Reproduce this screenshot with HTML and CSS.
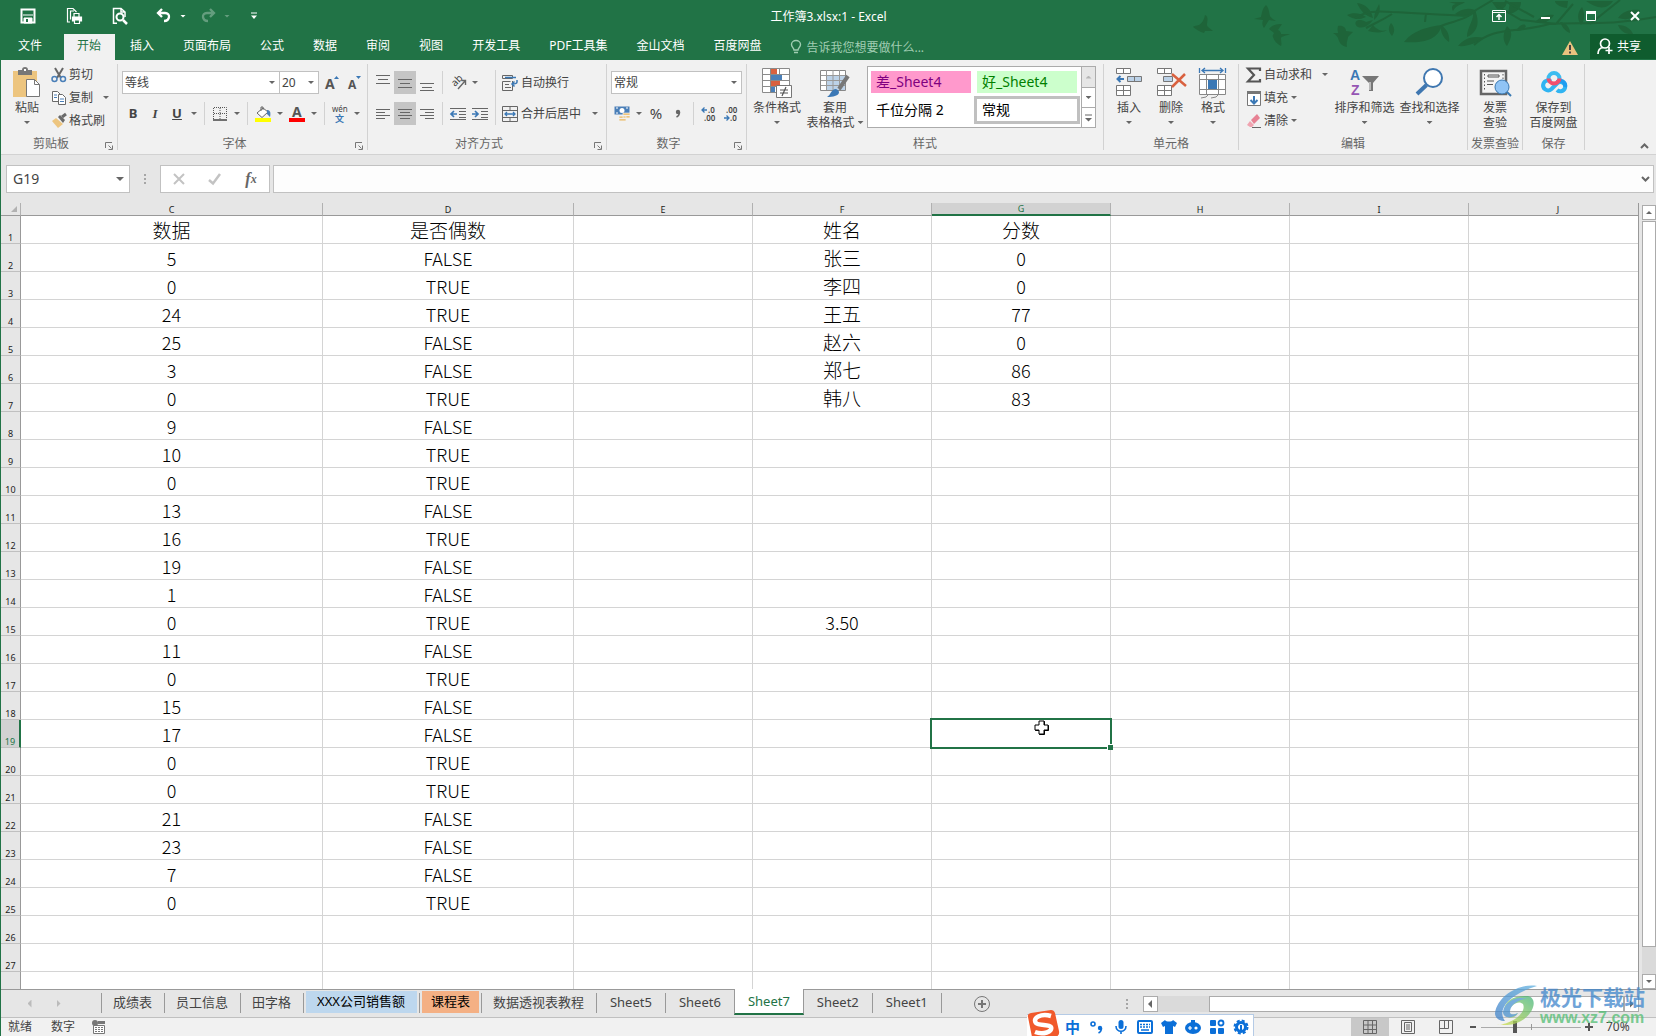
FILE: index.html
```html
<!DOCTYPE html>
<html lang="zh-CN">
<head>
<meta charset="utf-8">
<title>工作簿3.xlsx:1 - Excel</title>
<link rel="stylesheet" href="styles.css">
</head>
<body>
<header class="top">
  <svg class="foliage" width="466" height="60" viewBox="0 0 466 60" aria-hidden="true">
    <g fill="#1e6439">
      <path d="M15 15c-1 5-3 8-6 10-3 1-6 1-6 2 3 2 7 5 11 6l1-2 8 0c-2-2-6-4-6-6 0-4 2-8-2-10z"/>
      <path d="M76 5c-4 4-4 8-5 12l-7 2 9 1c-1 3-1 5 1 8l5-8 7 1c-3-2-5-3-6-5-1-4-1-8-4-11zM79 29c2-3 6-5 13-5l-4 6c2 1 3 2 3 4h9c-4 2-8 2-9 4 0 4 1 6 0 8-4-2-7-5-8-9-1-2 1-3 1-4zM148 26c-1 4 0 5 0 7l-5 0c3 2 4 3 5 5 1 4 3 8 9 9-1-4 1-8 1-10l5-5-7-1c0-3-3-6-8-5z"/>
      <path d="M157 15c6-3 14-2 19 2-6 3-13 3-19-2zM167 3c8 1 14 6 16 15-8-2-13-8-16-15zM176 22c-9-5-14 1-8 5 6 2 11-2 15-7zM184 20c0-8 4-13 5-16 2 6 0 12-5 16zM183 25c4 5 9 7 14 5-6 4-14 2-19 1zM201 23c4 4 4 9 1 13-4-4-4-9-1-13zM252 25c-3 11-12 19-38 17 6-7 14-14 38-17zM251 25c6 4 9 10 8 17-5-4-9-9-8-17zM285 10c-8-3-15 0-20 4 7 4 13 2 18-1 1 8-6 14-6 24 11-5 13-15 8-27zM294 38c-7 4-15 9-26 8 5-6 13-11 26-8zM317 26c7 6 4 13 0 20-5-6-4-13 0-20zM326 31c3-6 8-8 10-5-2 4-6 5-10 5zM259 2h16c-2 2-9 3-12 9-2-4-1-6 3-7zM302 2h15c-1 6-5 8-10 7zM320 2h11c0 7-5 11-13 12zM345 22c6-6 13-8 19-7-4 6-11 10-19 7zM370 22c2 5 5 9 10 11 0-6-4-10-10-11zM377 8c-7-1-12-4-12-7h13zM392 7c3 6 3 13-1 18-4-6-4-12 1-18zM396 1h27c-5 8-15 9-27 0zM428 18c5-7 13-9 22-8-4 8-12 11-22 8zM428 25c8 0 13 4 15 9-7 1-13-3-15-9z"/>
    </g>
    <g fill="none" stroke="#1e6439" stroke-width="2">
      <path d="M165 18c12-7 21-7 37-6 28 1 44 3 77 4M176 28c11-6 15-7 26-14M251 26c12-5 26-6 35-16l17-10M236 13l-1 9M284 45c20-19 40-11 75-21 30-2 60 2 107-7M307 6l24 14 35 4M315 1l29 16M366 24l17-20M400 24l30-24"/>
    </g>
  </svg>
  <div class="titlebar">
    <nav class="quick">
      <button class="q" aria-label="保存"><svg width="16" height="16"><path d="M1.500 1.500h13v13h-13z" fill="none" stroke="#fff" stroke-width="2"/><path d="M3 7h10M4 10h8v5H4z" stroke="#fff" fill="#fff"/><path d="M6 11h2v3H6z" fill="#217346"/></svg></button>
      <button class="q" aria-label="打印"><svg width="18" height="18" fill="none" stroke="#fff" stroke-width="1.200"><path d="M4 15H1.500V1.500H7L10.500 5M4.500 12.500V4H8"/><path d="M8 10V6.500h5V10"/><path d="M6.500 10h9v4h-9z" fill="#fff"/><path d="M8.500 13h5v3.500h-5z" fill="#217346"/></svg></button>
      <button class="q" aria-label="打印预览"><svg width="16" height="18" fill="none" stroke="#fff" stroke-width="1.500"><path d="M5 16.200H1.500V1.500H9L13 5v5M9 1.500V5h4"/><circle cx="8" cy="10" r="3.500" stroke-width="2"/><path d="M11 13l4 4" stroke-width="2.500"/></svg></button>
      <button class="q" aria-label="撤消"><svg width="16" height="16" fill="none" stroke="#fff" stroke-width="2.300"><path d="M6 1L2 5l4 4M2.500 5H9c6 0 5 8-1 8"/></svg><i class="caret lite"></i></button>
      <button class="q dim" aria-label="恢复"><svg width="16" height="16" fill="none" stroke="#fff" stroke-width="2.300"><path d="M10 1l4 4-4 4M13.500 5H7c-6 0-5 8 1 8"/></svg><i class="caret lite"></i></button>
      <button class="q" aria-label="自定义快速访问工具栏"><svg width="8" height="8"><path d="M1 1h6" stroke="#fff"/><path d="M1 3.500h6L4 7z" fill="#fff"/></svg></button>
    </nav>
    <h1>工作簿3.xlsx:1 - Excel</h1>
    <div class="winctl">
      <button aria-label="功能区显示选项"><svg width="14" height="12" fill="none" stroke="#fff"><path d="M.5.5h13v11H.5zM1 2.500h12"/><path d="M7 10V5M4.500 7L7 4.500 9.500 7" stroke-width="1.500"/></svg></button>
      <button aria-label="最小化"><svg width="10" height="10"><path d="M1 7h9" stroke="#fff" stroke-width="2"/></svg></button>
      <button aria-label="最大化"><svg width="10" height="10"><path d="M.5.5h9v9h-9z" fill="none" stroke="#fff"/><path d="M0 1.500h10" stroke="#fff" stroke-width="3"/></svg></button>
      <button aria-label="关闭"><svg width="10" height="10"><path d="M1 1l8 8M9 1L1 9" stroke="#fff" stroke-width="2"/></svg></button>
    </div>
  </div>
  <div class="tabbar">
    <button class="tab file">文件</button><button class="tab on">开始</button><button class="tab">插入</button><button class="tab">页面布局</button><button class="tab">公式</button><button class="tab">数据</button><button class="tab">审阅</button><button class="tab">视图</button><button class="tab">开发工具</button><button class="tab">PDF工具集</button><button class="tab">金山文档</button><button class="tab">百度网盘</button>
    <label class="tell"><svg width="12" height="14" fill="none" stroke="#a0cdb2"><path d="M4 10C4 8 1.500 7 1.500 4.500a4.500 4 0 0 1 9 0C10.500 7 8 8 8 10zM4 12.500h4" stroke-width="1.400"/></svg><input type="text" placeholder="告诉我您想要做什么..." aria-label="告诉我您想要做什么"></label>
    <svg class="warn" width="16" height="14"><path d="M8 0l8 14H0z" fill="#ebc37f"/><path d="M8 4v5M8 10.500v2" stroke="#444" stroke-width="2"/></svg>
    <button class="share"><svg width="16" height="17" fill="none" stroke="#fff" stroke-width="1.700"><circle cx="8" cy="5.500" r="4.500"/><path d="M1 16c0-4 2-6 5-6.500M12 9v7M8.500 12.500h7"/></svg>共享</button>
  </div>
</header>

<section class="ribbon">
  <div class="group g-clip">
    <div class="gbody">
      <button class="big paste"><svg width="30" height="30"><path d="M1 3h24v26H1z" fill="#edc57f"/><path d="M6 2h4a3 3 0 0 1 6 0h4v5H6z" fill="#777"/><path d="M12 1h2v2h-2z" fill="#fff"/><path d="M14.500 11.500h8l5 5v12h-13z" fill="#fff" stroke="#777"/><path d="M22.500 11.500v5h5" fill="none" stroke="#777"/></svg>粘贴<i class="cbox"><i class="caret"></i></i></button>
      <div class="stack">
        <button class="txt"><svg width="16" height="16" fill="none"><path d="M4 1l6 10M12 1L6 11" stroke="#666" stroke-width="2"/><circle cx="3.500" cy="12" r="2.500" stroke="#4a7fb8" stroke-width="1.500"/><circle cx="12" cy="12" r="2.500" stroke="#4a7fb8" stroke-width="1.500"/></svg>剪切</button>
        <button class="txt"><svg width="16" height="16" fill="#fff" stroke="#6a6a6a"><path d="M1.500 1.500h5l3 3v7h-8z"/><path d="M7.500 4.500h4l3 3v7h-7z"/><path d="M3 5h3M3 7.500h3M9 9h4M9 11.500h4" stroke="#4a7fb8"/></svg>复制<i class="caret far"></i></button>
        <button class="txt"><svg width="16" height="16"><path d="M1 8l4-3 7 6-5 4z" fill="#edc57f"/><path d="M7 4l2-2 5 5-2 3z" fill="#6a6a6a"/><path d="M11 4l4-3" stroke="#6a6a6a" stroke-width="3"/></svg>格式刷</button>
      </div>
    </div>
    <div class="gname"><span>剪贴板</span><button class="launch" aria-label="剪贴板选项"><svg width="8" height="8" fill="none" stroke="#777"><path d="M.5 6V.5H7M3.500 3.500l3 3M7.500 3.500v4h-4"/></svg></button></div>
  </div>

  <div class="group g-font">
    <div class="gbody rows">
      <div class="row">
        <select class="sel wfont" aria-label="字体"><option>等线</option></select><select class="sel wsize" aria-label="字号"><option>20</option></select>
        <button class="ic" aria-label="增大字号"><svg width="16" height="16"><text x="0" y="14" class="ga g15">A</text><path d="M9 4l2.500-3L14 4z" fill="#3b78b5"/></svg></button>
        <button class="ic" aria-label="减小字号"><svg width="16" height="16"><text x="1" y="14" class="ga g12">A</text><path d="M9 1h5l-2.500 3z" fill="#3b78b5"/></svg></button>
      </div>
      <div class="row">
        <button class="ic fb">B</button><button class="ic fi">I</button><button class="ic fu">U</button><button class="cb" aria-label="下划线选项"><i class="caret"></i></button><i class="vs"></i>
        <button class="ic" aria-label="边框"><svg width="14" height="14"><path d="M.5 12V.5h13V12M7 1v11M1 6.500h12" fill="none" stroke="#555" stroke-dasharray="1 1"/><path d="M0 13h14" stroke="#444" stroke-width="1.500"/></svg></button><button class="cb" aria-label="边框选项"><i class="caret"></i></button><i class="vs"></i>
        <button class="ic" aria-label="填充颜色"><svg width="16" height="16"><path d="M2 7l6-5 5 4-6 5.500z" fill="#fff" stroke="#666"/><path d="M6 5V1h2v3" fill="none" stroke="#666"/><path d="M12 4c3 0 4 2 3 7l-3-3z" fill="#4a7fb8"/><path d="M0 12h16v4H0z" fill="#ff0"/></svg></button><button class="cb" aria-label="填充颜色选项"><i class="caret"></i></button>
        <button class="ic" aria-label="字体颜色"><svg width="16" height="16"><text x="3" y="11" class="ga g15">A</text><path d="M0 12h16v4H0z" fill="#f00"/></svg></button><button class="cb" aria-label="字体颜色选项"><i class="caret"></i></button><i class="vs"></i>
        <button class="ic" aria-label="拼音"><svg width="18" height="18"><text x="1" y="7" class="pin">wén</text><text x="4" y="17" class="wen">文</text></svg></button><button class="cb" aria-label="拼音选项"><i class="caret"></i></button>
      </div>
    </div>
    <div class="gname"><span>字体</span><button class="launch" aria-label="字体选项"><svg width="8" height="8" fill="none" stroke="#777"><path d="M.5 6V.5H7M3.500 3.500l3 3M7.500 3.500v4h-4"/></svg></button></div>
  </div>

  <div class="group g-align">
    <div class="gbody cols">
      <div class="rows">
        <div class="row">
          <button class="ic" aria-label="顶端对齐"><svg width="14" height="16" stroke="#666"><path d="M0 .5h14M2 4.500h10M0 8.500h14"/></svg></button><button class="ic press" aria-label="垂直居中"><svg width="14" height="16" stroke="#666"><path d="M0 4.500h14M2 8.500h10M0 12.500h14"/></svg></button><button class="ic" aria-label="底端对齐"><svg width="14" height="16" stroke="#666"><path d="M0 8.500h14M2 12.500h10M0 15.500h14"/></svg></button><i class="vs"></i><button class="ic" aria-label="方向"><svg width="17" height="17"><text class="abt" transform="translate(5 13) rotate(-45)">ab</text><path d="M8 15l7-8M11.500 6.500h4V11" fill="none" stroke="#666" stroke-width="1.400"/></svg></button><button class="cb" aria-label="方向选项"><i class="caret"></i></button>
        </div>
        <div class="row">
          <button class="ic" aria-label="左对齐"><svg width="14" height="14" stroke="#666"><path d="M0 2.500h14M0 5.500h9M0 8.500h14M0 11.500h9"/></svg></button><button class="ic press" aria-label="居中"><svg width="14" height="14" stroke="#666"><path d="M0 2.500h14M2 5.500h10M0 8.500h14M2 11.500h10"/></svg></button><button class="ic" aria-label="右对齐"><svg width="14" height="14" stroke="#666"><path d="M0 2.500h14M5 5.500h9M0 8.500h14M5 11.500h9"/></svg></button><i class="vs"></i><button class="ic" aria-label="减少缩进量"><svg width="16" height="14" stroke="#666"><path d="M0 1.500h16M9 4.500h7M9 7.500h7M9 10.500h7M0 12.500h16"/><path d="M7 7H1M4 4L1 7l3 3" fill="none" stroke="#3b78b5" stroke-width="1.700"/></svg></button><button class="ic" aria-label="增加缩进量"><svg width="16" height="14" stroke="#666"><path d="M0 1.500h16M9 4.500h7M9 7.500h7M9 10.500h7M0 12.500h16"/><path d="M0 7h6M3 4l3 3-3 3" fill="none" stroke="#3b78b5" stroke-width="1.700"/></svg></button>
        </div>
      </div>
      <i class="vs tall"></i>
      <div class="rows second">
        <button class="txt wide"><svg width="16" height="16" fill="none" stroke="#666"><path d="M.5.500h10v3H.5zM10.500 6V15.500H.5V6.500h8M3 9.500h4M3 12.500h6"/><path d="M3 2.500h11M15 5v2c0 2-2 2-5 2M12.500 6.500L10 9l2.500 2.500" stroke="#3b78b5" stroke-width="1.500"/></svg>自动换行</button>
        <button class="txt wide"><svg width="16" height="16" fill="none" stroke="#666"><path d="M.5.5h15v15H.5zM.5 4.500h15M.5 11.500h15M8 .5v4M8 11.500v4"/><path d="M3 8h10M5 6L3 8l2 2M11 6l2 2-2 2" stroke="#3b78b5" stroke-width="1.300"/></svg>合并后居中<i class="caret far"></i></button>
      </div>
    </div>
    <div class="gname"><span>对齐方式</span><button class="launch" aria-label="对齐选项"><svg width="8" height="8" fill="none" stroke="#777"><path d="M.5 6V.5H7M3.500 3.500l3 3M7.500 3.500v4h-4"/></svg></button></div>
  </div>

  <div class="group g-num">
    <div class="gbody rows">
      <div class="row"><select class="sel wnum" aria-label="数字格式"><option>常规</option></select></div>
      <div class="row">
        <button class="ic" aria-label="会计数字格式"><svg width="17" height="17"><path d="M.5 1.500h15v8H.5z" fill="#4a7fb8"/><circle cx="8" cy="5.500" r="2.500" fill="#fff"/><path d="M2 3h2M12 3h2M2 8h2" stroke="#fff"/><path d="M9 8h7v5H9zM5 11h7v5H5z" fill="#edc57f" stroke="#f1f1f1" stroke-width=".7"/><path d="M9 10.500h7M5 13.500h7" stroke="#f1f1f1"/></svg></button><button class="cb" aria-label="会计格式选项"><i class="caret"></i></button><button class="ic pct">%</button><button class="ic" aria-label="千位分隔样式"><svg width="8" height="12"><circle cx="4" cy="4" r="2.200" fill="#666"/><path d="M5.500 4c0 2-1 4-3 5" fill="none" stroke="#666" stroke-width="1.500"/></svg></button><i class="vs"></i>
        <button class="ic" aria-label="增加小数位数"><svg width="16" height="16"><text x="7" y="7" class="dec">.0</text><text x="3" y="15" class="dec">.00</text><path d="M6 4H1M3.500 1.500L1 4l2.500 2.500" fill="none" stroke="#3b78b5" stroke-width="1.300"/></svg></button><button class="ic" aria-label="减少小数位数"><svg width="16" height="16"><text x="3" y="7" class="dec">.00</text><text x="7" y="15" class="dec">.0</text><path d="M1 12h5M3.500 9.500L6 12l-2.500 2.500" fill="none" stroke="#3b78b5" stroke-width="1.300"/></svg></button>
      </div>
    </div>
    <div class="gname"><span>数字</span><button class="launch" aria-label="数字选项"><svg width="8" height="8" fill="none" stroke="#777"><path d="M.5 6V.5H7M3.500 3.500l3 3M7.500 3.500v4h-4"/></svg></button></div>
  </div>

  <div class="group g-style">
    <div class="gbody">
      <button class="big w56"><svg width="32" height="30"><path d="M1.500.5h27v24h-27zM9.500.5v24M18.500.5v24M1.500 6.500h27M1.500 12.500h27M1.500 18.500h27" fill="#fff" stroke="#8a8a8a"/><path d="M10 1h6v5h-6zM10 13h9v5h-9z" fill="#d9613f"/><path d="M10 7h11v5H10zM10 19h4v5h-4z" fill="#4a7fb8"/><path d="M15.500 17.500h15v12h-15z" fill="#fff" stroke="#777"/><path d="M19 22h8M19 25h8M25 19l-4 9" stroke="#555" stroke-width="1.200"/></svg>条件格式<i class="cbox"><i class="caret"></i></i></button>
      <button class="big w60"><svg width="30" height="30"><path d="M.5 2.500h25v20H.5z" fill="#fff" stroke="#888"/><path d="M7 7h18v15H7z" fill="#bcd2e8"/><path d="M6.500 2v20M13 2v20M19.500 2v20M1 7.500h24M1 12.500h24M1 17.500h24" stroke="#999"/><path d="M28 8l-9 13" stroke="#777" stroke-width="4"/><path d="M7 29c4-2 4-8 9-8 5 2 5 8-9 8z" fill="#3b78b5"/></svg>套用<span class="line">表格格式<i class="caret"></i></span></button>
      <div class="gallery">
        <div class="swatches"><button class="sw bad">差_Sheet4</button><button class="sw good">好_Sheet4</button><button class="sw">千位分隔 2</button><button class="sw cur">常规</button></div>
        <div class="gscroll"><button class="off" aria-label="上一行"><i class="caret up"></i></button><button aria-label="下一行"><i class="caret"></i></button><button aria-label="其他"><svg width="7" height="8"><path d="M0 1h7" stroke="#666"/><path d="M0 4h7L3.500 7.500z" fill="#666"/></svg></button></div>
      </div>
    </div>
    <div class="gname"><span>样式</span></div>
  </div>

  <div class="group g-cells">
    <div class="gbody">
      <button class="big w42"><svg width="28" height="30" fill="#fff" stroke="#777"><path d="M1.500.5h14v5h-14zM8.500.5v5M1.500 17.500h14v10h-14zM8.500 17.500v10M1.500 22.500h14"/><path d="M12.500 8.500h14v5h-14zM19.500 8.500v5" fill="#bcd2e8"/><path d="M9 11H3M5.500 8L2.500 11l3 3" stroke="#3b78b5" stroke-width="2" fill="none"/></svg>插入<i class="cbox"><i class="caret"></i></i></button>
      <button class="big w42"><svg width="30" height="30" fill="#fff" stroke="#777"><path d="M1.500.5h14v5h-14zM8.500.5v5M1.500 17.500h14v10h-14zM8.500 17.500v10M1.500 22.500h14"/><path d="M7.500 8.500h9v5h-9z" fill="#bcd2e8"/><path d="M16 6l14 12M29 6L16 19" stroke="#d9613f" stroke-width="2.500"/></svg>删除<i class="cbox"><i class="caret"></i></i></button>
      <button class="big w42"><svg width="28" height="32" fill="#fff" stroke="#888"><path d="M.5 6.500h26v20H.5zM7.500 6.500v20M19.500 6.500v20M.5 11.500h26M.5 21.500h26"/><path d="M9 12h9v9H9z" fill="#3b78b5" stroke="none"/><path d="M2 30l5-1 3-3M12 30l5-1 3-3" fill="none"/><path d="M.5 0v5M26.500 0v5M3 2.500h21M6 0L3 2.500 6 5M21 0l3 2.500L21 5" stroke="#3b78b5" fill="none" stroke-width="1.300"/></svg>格式<i class="cbox"><i class="caret"></i></i></button>
    </div>
    <div class="gname"><span>单元格</span></div>
  </div>

  <div class="group g-edit">
    <div class="gbody">
      <div class="stack">
        <button class="txt"><svg width="16" height="16"><path d="M14 4V1.500H2L8 8l-6 6.500h12V12" fill="none" stroke="#555" stroke-width="2.200"/></svg>自动求和<i class="caret far"></i></button>
        <button class="txt"><svg width="16" height="16"><path d="M1.500 1.500h13v14h-13z" fill="#fff" stroke="#777"/><path d="M1 1h14v3H1z" fill="#777"/><path d="M8 6v7M4.500 10L8 13.500l3.500-3.500" fill="none" stroke="#3b78b5" stroke-width="2"/></svg>填充<i class="caret near"></i></button>
        <button class="txt"><svg width="16" height="16"><path d="M5 7l6-6 3 4-6 6z" fill="#e78294"/><path d="M4 8l4 4-2 2H4l-3-2z" fill="#f0a3b0"/><path d="M6 14.500h9" stroke="#666"/></svg>清除<i class="caret near"></i></button>
      </div>
      <button class="big w64"><svg width="32" height="30"><text x="1" y="12" class="az a">A</text><text x="2" y="27" class="az z">Z</text><path d="M13 8h17l-6 7v8h-4v-8z" fill="#777"/><path d="M21 14v8" stroke="#fff"/></svg>排序和筛选<i class="cbox"><i class="caret"></i></i></button>
      <button class="big w64"><svg width="30" height="30"><circle cx="18" cy="10" r="9" fill="#fff" stroke="#3f77b0" stroke-width="2"/><path d="M11.500 17L2 26" stroke="#3f77b0" stroke-width="4"/></svg>查找和选择<i class="cbox"><i class="caret"></i></i></button>
    </div>
    <div class="gname"><span>编辑</span></div>
  </div>

  <div class="group g-inv">
    <div class="gbody mid"><button class="big w42"><svg width="32" height="30"><path d="M2 3h25v23H2z" fill="#f4f4f4" stroke="#666" stroke-width="2.500"/><path d="M5.500 6v17M24 6v6" stroke="#555" stroke-dasharray="1.500 2"/><path d="M9 7h11v2H9z" fill="#f1f1f1" stroke="#555"/><path d="M8 13h7M8 16.500h6" stroke="#555"/><circle cx="23" cy="19" r="7" fill="#90c4f5" stroke="#3a79b2"/><path d="M28 24l4 4" stroke="#3a79b2" stroke-width="2"/></svg>发票<span class="line">查验</span></button></div>
    <div class="gname"><span>发票查验</span></div>
  </div>
  <div class="group g-save">
    <div class="gbody mid"><button class="big w56"><svg width="28" height="30" fill="none" stroke-width="4"><path d="M11 13.500C9 12 5 12 3.500 15.500c-2 5 4 9 8 5.500l5-5c4-4 10-1 8.500 4-1.500 4-6 4-8 2" stroke="#2fb4f2"/><path d="M17 14c4-3 9 0 8 5" stroke="#1f9df0"/><path d="M8.500 10a5.500 5.500 0 0 0 11 0" stroke="#f04f6e"/><path d="M8.500 10.500a5.500 5.500 0 0 1 11 0" stroke="#3cbcf0"/></svg>保存到<span class="line">百度网盘</span></button></div>
    <div class="gname"><span>保存</span></div>
  </div>
  <button class="collapse" aria-label="折叠功能区"><svg width="9" height="6"><path d="M1 5l3.500-3.500L8 5" fill="none" stroke="#666" stroke-width="2"/></svg></button>
</section>

<section class="formula">
  <div class="namebox"><input type="text" value="G19" aria-label="名称框"><button aria-label="名称列表"><i class="caret big-c"></i></button></div>
  <i class="dots"></i>
  <div class="fxbox">
    <button aria-label="取消"><svg width="12" height="12"><path d="M1 1l10 10M11 1L1 11" stroke="#c3c3c3" stroke-width="2"/></svg></button>
    <button aria-label="输入"><svg width="14" height="12"><path d="M1 7l4 3.500L12 1" fill="none" stroke="#c3c3c3" stroke-width="2.500"/></svg></button>
    <button class="fx" aria-label="插入函数">f<sub>x</sub></button>
  </div>
  <div class="fbar"><input type="text" aria-label="编辑栏"><button aria-label="展开编辑栏"><svg width="9" height="6"><path d="M1 1l3.500 3.500L8 1" fill="none" stroke="#666" stroke-width="2"/></svg></button></div>
</section>

<main class="sheet">
  <div class="gridwrap">
    <table class="grid">
      <colgroup><col class="c-n"><col class="c-c"><col class="c-d"><col class="c-s"><col class="c-s"><col class="c-s"><col class="c-s"><col class="c-s"><col></colgroup>
      <thead><tr><th class="corner" aria-label="全选"><svg width="6" height="6"><path d="M6 0v6H0z" fill="#b1b1b1"/></svg></th><th>C</th><th>D</th><th>E</th><th>F</th><th class="selcol">G</th><th>H</th><th>I</th><th>J</th></tr></thead>
      <tbody>
        <tr><th>1<td>数据<td>是否偶数<td><td>姓名<td>分数<td><td><td>
        <tr><th>2<td>5<td>FALSE<td><td>张三<td>0<td><td><td>
        <tr><th>3<td>0<td>TRUE<td><td>李四<td>0<td><td><td>
        <tr><th>4<td>24<td>TRUE<td><td>王五<td>77<td><td><td>
        <tr><th>5<td>25<td>FALSE<td><td>赵六<td>0<td><td><td>
        <tr><th>6<td>3<td>FALSE<td><td>郑七<td>86<td><td><td>
        <tr><th>7<td>0<td>TRUE<td><td>韩八<td>83<td><td><td>
        <tr><th>8<td>9<td>FALSE<td><td><td><td><td><td>
        <tr><th>9<td>10<td>TRUE<td><td><td><td><td><td>
        <tr><th>10<td>0<td>TRUE<td><td><td><td><td><td>
        <tr><th>11<td>13<td>FALSE<td><td><td><td><td><td>
        <tr><th>12<td>16<td>TRUE<td><td><td><td><td><td>
        <tr><th>13<td>19<td>FALSE<td><td><td><td><td><td>
        <tr><th>14<td>1<td>FALSE<td><td><td><td><td><td>
        <tr><th>15<td>0<td>TRUE<td><td>3.50<td><td><td><td>
        <tr><th>16<td>11<td>FALSE<td><td><td><td><td><td>
        <tr><th>17<td>0<td>TRUE<td><td><td><td><td><td>
        <tr><th>18<td>15<td>FALSE<td><td><td><td><td><td>
        <tr><th class="selrow">19<td>17<td>FALSE<td><td><td class="active"><div class="frame"><i class="handle"></i><svg class="cross" width="16" height="16"><path d="M5.500 1.500h5v4h4v5h-4v4h-5v-4h-4v-5h4z" fill="#000" stroke="#000"/><path d="M5 1h5v4h4v5h-4v4H5v-4H1V5h4z" fill="#fff" stroke="#000"/></svg></div><td><td><td>
        <tr><th>20<td>0<td>TRUE<td><td><td><td><td><td>
        <tr><th>21<td>0<td>TRUE<td><td><td><td><td><td>
        <tr><th>22<td>21<td>FALSE<td><td><td><td><td><td>
        <tr><th>23<td>23<td>FALSE<td><td><td><td><td><td>
        <tr><th>24<td>7<td>FALSE<td><td><td><td><td><td>
        <tr><th>25<td>0<td>TRUE<td><td><td><td><td><td>
        <tr><th>26<td><td><td><td><td><td><td><td>
        <tr><th>27<td><td><td><td><td><td><td><td>
        <tr><th><td><td><td><td><td><td><td><td>
      </tbody>
    </table>
  </div>
  <div class="vscroll"><button aria-label="向上滚动"><i class="caret up"></i></button><div class="vthumb"></div><div class="vtrack"></div><button aria-label="向下滚动"><i class="caret"></i></button></div>
</main>

<footer>
  <div class="sheets">
    <div class="navs"><button aria-label="上一个工作表"><i class="tri left"></i></button><button aria-label="下一个工作表"><i class="tri right"></i></button></div>
    <button class="st">成绩表</button><button class="st">员工信息</button><button class="st">田字格</button><button class="st blue"><span>XXX公司销售额</span></button><button class="st orange"><span>课程表</span></button><button class="st">数据透视表教程</button><button class="st en">Sheet5</button><button class="st en">Sheet6</button><button class="st en cur">Sheet7</button><button class="st en">Sheet2</button><button class="st en">Sheet1</button><i class="stend"></i>
    <button class="add" aria-label="新工作表"><svg width="16" height="16" fill="none" stroke="#777"><circle cx="8" cy="8" r="7.500"/><path d="M8 4v8M4 8h8" stroke-width="2"/></svg></button>
    <i class="dots hd"></i>
    <div class="hscroll"><button aria-label="向左滚动"><i class="tri left dk"></i></button><div class="htrack"></div><div class="hthumb"></div><button aria-label="向右滚动"><i class="tri right dk"></i></button></div>
  </div>
  <div class="status">
    <span>就绪</span><span>数字</span>
    <svg width="13" height="14"><path d="M1.500 5.500h11v8h-11z" fill="#fff" stroke="#777"/><path d="M6 1h7v3H6z" fill="#777"/><circle cx="3" cy="3" r="3" fill="#777"/><path d="M3 7.500h8M3 9.500h8M3 11.500h8" stroke="#777" stroke-dasharray="2 1"/></svg>
    <div class="views">
      <button class="on" aria-label="普通"><svg width="14" height="14" fill="none" stroke="#666"><path d="M.5.500h13v13H.5zM5 .5v13M9.500.5v13M.5 5h13M.5 9.500h13"/></svg></button>
      <button aria-label="页面布局"><svg width="14" height="14" fill="none" stroke="#666"><path d="M.5.5h13v13H.5zM3.500 2.500h7v9h-7zM5 5h4M5 7h4M5 9h4"/></svg></button>
      <button aria-label="分页预览"><svg width="14" height="14" fill="none" stroke="#666"><path d="M.5.5h13v13H.5zM.5 8.500h9v-8M5.500.5v8"/></svg></button>
    </div>
    <div class="zoom"><button aria-label="缩小"><svg width="8" height="8"><path d="M1 4h6" stroke="#555" stroke-width="2"/></svg></button><input type="range" min="0" max="100" value="33" aria-label="缩放"><button aria-label="放大"><svg width="8" height="8"><path d="M0 4h8M4 0v8" stroke="#555" stroke-width="2"/></svg></button><output>70%</output></div>
  </div>
</footer>

<aside class="ime">
  <svg class="sogou" width="34" height="30"><path d="M1 7Q0 4 4 3L24 0q3 0 4 3l4 18q1 5-4 6L9 31q-3 0-4-4z" fill="#f1592b"/><path d="M24 6C14 3 5 8 9 13c3 3 13 1 15 4 2 5-8 8-16 5" fill="none" stroke="#fff" stroke-width="4.500"/></svg>
  <span class="zh">中</span>
  <svg width="16" height="16"><circle cx="4" cy="5" r="2" fill="none" stroke="#0b6fd8" stroke-width="1.600"/><circle cx="11" cy="9" r="2.200" fill="#0b6fd8"/><path d="M12.500 9c0 3-1 4-3 5" fill="none" stroke="#0b6fd8" stroke-width="1.600"/></svg>
  <svg width="16" height="16"><rect x="5.500" y="1" width="5" height="9" rx="2.500" fill="#0b6fd8"/><path d="M3 7c0 7 10 7 10 0M8 12v3" fill="none" stroke="#0b6fd8" stroke-width="1.600"/></svg>
  <svg width="16" height="16"><rect x="1" y="2" width="14" height="12" rx="1" fill="#fff" stroke="#0b6fd8" stroke-width="2"/><path d="M3 5.500h10M3 8h10" stroke="#0b6fd8" stroke-width="1.500" stroke-dasharray="2 1"/><path d="M4 11h8" stroke="#0b6fd8" stroke-width="1.500"/></svg>
  <svg width="16" height="16"><path d="M4 1c1 2 7 2 8 0l4 3-2 4-2-1v8H4V7L2 8 0 4z" fill="#0b6fd8"/></svg>
  <svg width="16" height="16"><ellipse cx="8" cy="9" rx="8" ry="6" fill="#0b6fd8"/><path d="M6 1h4v3H6z" fill="#0b6fd8"/><path d="M3 9h4M5 7v4" stroke="#fff" stroke-width="1.200"/><circle cx="11" cy="9" r="1.600" fill="#fff"/></svg>
  <svg width="16" height="16" fill="#0b6fd8"><rect x="1" y="1" width="6" height="6" rx="1"/><rect x="1" y="9" width="6" height="6" rx="1"/><rect x="9" y="9" width="6" height="6" rx="1"/><rect x="9.500" y="1.500" width="5" height="5" rx="2.500" fill="#fff" stroke="#0b6fd8" stroke-width="1.800"/></svg>
  <svg width="16" height="16"><circle cx="8" cy="8" r="4.500" fill="none" stroke="#0b6fd8" stroke-width="3"/><circle cx="8" cy="8" r="6.500" fill="none" stroke="#0b6fd8" stroke-width="2" stroke-dasharray="3 2.100"/><path d="M8 6v7" stroke="#0b6fd8" stroke-width="2"/></svg>
</aside>

<aside class="mark">
  <svg width="46" height="44"><defs><linearGradient id="m1" x1="1" y1="0" x2="0" y2="1"><stop offset="0" stop-color="#5fb0e0"/><stop offset="1" stop-color="#3f80c9"/></linearGradient><linearGradient id="m2" x1="1" y1="0" x2="0" y2="1"><stop offset="0" stop-color="#3fb37c"/><stop offset="1" stop-color="#d8e04a"/></linearGradient></defs><path d="M43 2C26-1 4 11 1 29c0 5 4 8 10 8C2 25 16 10 43 2z" fill="url(#m1)"/><path d="M10 27c0-10 10-16 24-15 12 3 4 23-14 28-9 2-14 0-17 1 15-1 30-12 26-21-4-4-12 0-14 7-1 4 4 5 9 2-3 7-14 6-14-2z" fill="url(#m2)"/><path d="M9 28c1-9 12-17 24-13-7 0-16 5-17 12-1 4 4 4 8 2-4 6-15 6-15-1z" fill="#4a93cf"/></svg>
  <div><p class="m-a">极光下载站</p><p class="m-b">www.xz7.com</p></div>
</aside>
</body>
</html>
```
FILE: styles.css
```css
* { box-sizing: border-box; }
body {
  margin: 0;
  height: 100vh;
  display: flex;
  flex-direction: column;
  overflow: hidden;
  position: relative;
  border-left: 1px solid #217346;
  background: #e6e6e6;
  color: #444;
  font: 12px/15px "Noto Sans", "Noto Sans CJK SC", sans-serif;
}
button, input, select { font: inherit; color: inherit; }
button {
  border: 0;
  padding: 0;
  margin: 0;
  background: none;
  display: inline-flex;
  align-items: center;
  justify-content: center;
}
svg { display: block; flex: none; overflow: visible; }
i { font-style: normal; }

.caret {
  flex: none;
  width: 6px;
  height: 3px;
  background: #666;
  clip-path: polygon(0 0, 100% 0, 50% 100%);
}
.caret.up { clip-path: polygon(50% 0, 100% 100%, 0 100%); }
.caret.lite { background: #fff; }
.caret.big-c { width: 8px; height: 4px; }
.tri { width: 4px; height: 8px; background: #bbb; }
.tri.left { clip-path: polygon(0 50%, 100% 0, 100% 100%); }
.tri.right { clip-path: polygon(0 0, 100% 50%, 0 100%); }
.tri.dk { background: #666; }

/* title bar and ribbon tabs */
.top { position: relative; background: #217346; color: #fff; flex: none; }
.foliage { position: absolute; top: 0; right: 0; overflow: hidden; }
.titlebar { position: relative; height: 34px; display: grid; grid-template-columns: 1fr auto 1fr; }
.titlebar h1 { margin: 0; font-size: 12px; font-weight: 400; line-height: 34px; }
.quick { display: flex; align-items: center; padding: 0 0 2px 19px; }
.q { height: 24px; margin-right: 28px; gap: 8px; }
.q:first-child { margin-right: 30px; }
.q:nth-child(4) { margin-right: 14px; }
.q:nth-child(5) { margin-right: 20px; }
.q.dim { opacity: .3; }
.winctl { display: flex; justify-content: flex-end; padding-bottom: 2px; }
.winctl button { width: 46px; }
.winctl button:last-child { width: 42px; }
.tabbar { position: relative; height: 26px; display: flex; }
.tab { padding: 0 14px 2px 15px; line-height: 24px; }
.tab.file { padding: 0 22px 2px 17px; }
.tab.on { background: #f1f1f1; color: #217346; padding: 0 14px 2px 13px; }
.tell { display: flex; align-items: center; gap: 4px; padding: 0 0 0 15px; flex: 1; }
.tell input { flex: 1; min-width: 0; border: 0; padding: 0; background: none; }
.tell input::placeholder { color: #a0cdb2; opacity: 1; }
.warn { align-self: center; margin: 2px 12px 0 0; }
.share { width: 66px; height: 25px; background: #0f5c2e; gap: 4px; justify-content: flex-start; padding-left: 7px; }

/* ribbon */
.ribbon { flex: none; height: 95px; background: #f1f1f1; border-bottom: 1px solid #d2d2d2; display: flex; position: relative; }
.group { flex: none; height: 86px; margin-top: 4px; border-right: 1px solid #d2d2d2; display: flex; flex-direction: column; }
.g-clip { width: 117px; }
.g-font { width: 250px; }
.g-align { width: 239px; }
.g-num { width: 140px; }
.g-style { width: 357px; }
.g-cells { width: 135px; }
.g-edit { width: 229px; }
.g-inv { width: 55px; }
.g-save { width: 62px; }
.gbody { height: 70px; display: flex; flex: none; }
.gbody.mid { justify-content: center; }
.gname { display: flex; height: 16px; line-height: 19px; color: #666; white-space: nowrap; }
.gname span { flex: 1; text-align: center; }
.launch { width: 16px; padding-top: 8px; }
.big { flex-direction: column; justify-content: flex-start; padding-top: 4px; white-space: nowrap; }
.big svg { height: 30px; margin-bottom: 2px; }
.cbox { height: 15px; display: flex; align-items: center; }
.line { display: flex; align-items: center; gap: 3px; }
.paste { width: 28px; margin-left: 12px; }
.w42 { width: 42px; }
.w56 { width: 56px; }
.w60 { width: 60px; }
.w64 { width: 65px; }
.g-style .gbody { padding-left: 2px; }
.g-cells .gbody { padding-left: 4px; }
.stack { display: flex; flex-direction: column; gap: 2px; align-items: flex-start; margin-left: 10px; }
.g-edit .stack { margin-left: 7px; width: 86px; }
.txt { height: 21px; gap: 2px; white-space: nowrap; }
.txt.wide { height: 23px; gap: 3px; justify-content: flex-start; }
.caret.far { margin-left: 8px; }
.caret.near { margin-left: 1px; }
.rows { flex-direction: column; display: flex; gap: 8px; padding: 7px 0 0 4px; }
.rows.second { padding-left: 6px; }
.row { display: flex; height: 23px; }
.ic { width: 22px; height: 23px; }
.press { background: #c5c5c5; }
.cb { width: 12px; }
.vs { width: 1px; margin: 0 4px; background: #d2d2d2; }
.vs.tall { margin: 6px 0 9px 4px; }
.sel {
  appearance: none;
  height: 23px;
  border: 1px solid #c1c1c1;
  border-radius: 0;
  padding: 0 2px;
  background: #fff url("data:image/svg+xml,%3Csvg xmlns='http://www.w3.org/2000/svg' width='6' height='3'%3E%3Cpath d='M0 0h6L3 3z' fill='%23666'/%3E%3C/svg%3E") no-repeat right 4px center;
}
.wfont { width: 158px; }
.wsize { width: 40px; margin: 0 3px 0 -1px; }
.wnum { width: 131px; }
.fb, .fi, .fu { font-size: 13px; font-weight: 700; }
.fi { font-family: "Liberation Serif", serif; font-style: italic; }
.fu { text-decoration: underline; }
.pct { font-size: 15px; }
.ga { font-weight: 700; fill: #555; }
.g15 { font-size: 14px; }
.g12 { font-size: 12px; }
.pin { font-size: 8px; fill: #444; }
.wen { font-size: 9px; font-weight: 700; fill: #3b78b5; }
.abt { font-size: 10px; fill: #444; }
.dec { font-size: 8px; fill: #444; font-weight: 600; }
.az { font: 700 14px "Liberation Sans", sans-serif; }
.az.a { fill: #3b78b5; }
.az.z { fill: #9656b4; }
.gallery { display: flex; width: 229px; height: 62px; margin: 2px 0 0 2px; border: 1px solid #ababab; background: #fff; }
.swatches { flex: 1; display: grid; grid-template-columns: 100px 106px; grid-template-rows: 28px 28px; gap: 0 3px; padding: 1px 0 0 3px; }
.sw { justify-content: flex-start; padding: 0 0 1px 5px; height: 22px; font-size: 14px; color: #000; align-self: center; }
.sw.bad { background: #ff99cc; color: #800080; }
.sw.good { background: #ccffcc; color: #008000; margin: 0 3px; }
.sw.cur { height: 28px; border: 3px solid #c0c0c0; }
.gscroll { width: 14px; border-left: 1px solid #ababab; display: grid; grid-template-rows: 1fr 1fr 1fr; }
.gscroll button + button { border-top: 1px solid #ababab; }
.gscroll .off { background: #e6e6e6; }
.gscroll .off .caret { background: #b5b5b5; }
.collapse { margin: auto 7px 5px auto; }

/* formula bar */
.formula { flex: none; display: flex; height: 48px; padding: 10px 2px 10px 5px; font-size: 14px; }
.namebox, .fxbox, .fbar { display: flex; border: 1px solid #c1c1c1; background: #fff; }
.namebox { width: 124px; }
.namebox input, .fbar input { flex: 1; min-width: 0; border: 0; background: none; padding: 0 6px 2px; }
.namebox button { width: 18px; }
.dots { width: 2px; height: 10px; align-self: center; margin: 0 14px; background: repeating-linear-gradient(#a6a6a6 0 2px, transparent 2px 4px); }
.fxbox { width: 110px; margin-right: 3px; }
.fxbox button { flex: 1; }
.fxbox .fx { font: italic 700 16px/20px "Liberation Serif", serif; color: #666; }
.fx sub { font-size: 12px; line-height: 10px; }
.fbar { flex: 1; background: #fdfdfd; }
.fbar button { width: 16px; }

/* worksheet grid */
.sheet { flex: 1; min-height: 0; display: flex; border-bottom: 1px solid #999; }
.gridwrap { flex: 1; min-width: 0; overflow: hidden; border-right: 1px solid #999; }
.grid { table-layout: fixed; width: calc(100% + 10px); border-collapse: separate; border-spacing: 0; }
.c-n { width: 20px; }
.c-c { width: 302px; }
.c-d { width: 251px; }
.c-s { width: 179px; }
.grid th, .grid td { padding: 0; border: solid #d4d4d4; border-width: 0 1px 1px 0; text-align: center; white-space: nowrap; }
.grid th { background: #e6e6e6; color: #222; font-size: 9px; font-weight: 400; }
.grid thead th { height: 13px; line-height: 11px; vertical-align: bottom; border-color: #b1b1b1; border-bottom-color: #999; }
.grid .corner { border-right-color: #b1b1b1; }
.corner svg { margin: 0 0 3px 10px; }
.grid thead .selcol { background: #d2d2d2; color: #217346; border-bottom: 2px solid #217346; line-height: 10px; }
.grid tbody th { height: 28px; line-height: 10px; vertical-align: bottom; border-color: #c0c0c0; border-right-color: #999; }
.grid tbody .selrow { background: #d2d2d2; color: #217346; border-right: 2px solid #217346; }
.grid td { height: 28px; padding-top: 1px; line-height: 26px; background: #fff; color: #000; font-family: "Noto Sans CJK SC", sans-serif; font-weight: 300; font-size: 18px; }
.grid tbody tr:first-child td, .grid tbody tr:nth-child(-n+7) td:nth-child(5) { font-size: 19px; }
.grid .active { position: relative; overflow: visible; }
.frame { position: absolute; inset: -2px; border: 2px solid #217346; z-index: 1; }
.handle { position: absolute; right: -3px; bottom: -3px; width: 6px; height: 6px; background: #217346; border: solid #fff; border-width: 1px 0 0 1px; }
.cross { position: absolute; left: 102px; top: 0; }
.vscroll { width: 17px; flex: none; display: flex; flex-direction: column; padding: 2px 0 0 3px; }
.vscroll button { height: 15px; border: 1px solid #ababab; background: #fff; }
.vthumb { flex: 728; border: 1px solid #ababab; background: #fff; margin-top: 1px; }
.vtrack { flex: 27; background: #dadada; }

/* sheet tabs */
footer { flex: none; }
.sheets { height: 28px; display: flex; border-bottom: 1px solid #c0c0c0; font-size: 13px; }
.navs { width: 100px; display: flex; padding-left: 14px; }
.navs button { width: 29px; }
.st { padding: 0 12px 3px 11px; white-space: nowrap; border: solid transparent; border-width: 0 0 0 1px; background: linear-gradient(#999, #999) no-repeat 0 3px / 1px 20px; background-origin: border-box; }
.st.en { padding: 0 13px 3px; }
.st.blue, .st.orange { padding: 0 2px; color: #000; }
.st.blue span, .st.orange span { height: 22px; line-height: 20px; margin-bottom: 3px; }
.st.blue span { background: #bdd7ee; padding: 0 12px 0 11px; }
.st.orange span { background: #f4b084; padding: 0 9px; }
.st.en.cur { margin-top: -1px; height: 26px; background: #fff; color: #217346; border: solid #999; border-width: 0 1px 2px; border-bottom-color: #217346; padding-bottom: 0; }
.st.cur + .st { background: none; border-width: 0; }
.stend { width: 1px; height: 20px; margin-top: 3px; background: #999; }
.add { margin: 0 auto 0 32px; }
.dots.hd { margin: 0 15px; }
.hscroll { display: flex; width: 30%; height: 16px; margin: 6px 17px 0 0; }
.hscroll button { width: 15px; border: 1px solid #ababab; background: #fff; }
.htrack { flex: 52; background: #dadada; }
.hthumb { flex: 413; border: 1px solid #ababab; background: #fff; }

/* status bar */
.status { height: 18px; display: flex; align-items: center; background: #f1f1f1; padding-left: 7px; line-height: 18px; }
.status > span { margin-right: 19px; }
.status > svg { margin-left: -2px; }
.views { margin-left: auto; display: flex; height: 18px; }
.views button { width: 38px; }
.views .on { background: #c8c8c8; }
.zoom { display: flex; align-items: center; width: 191px; padding-left: 3px; }
.zoom input { appearance: none; width: 100px; height: 14px; margin: 0 3px; background: linear-gradient(#999, #999) no-repeat 50% 50% / 1px 6px, linear-gradient(#aaa, #aaa) no-repeat 0 50% / 100% 1px; }
.zoom input::-webkit-slider-thumb { appearance: none; width: 4px; height: 12px; background: #555; }
.zoom button { width: 10px; }
.zoom output { margin-left: 12px; }

/* floating input-method bar */
.ime { position: absolute; right: 402px; bottom: 0; height: 22px; display: flex; align-items: center; gap: 8px; background: #fff; border: 1px solid #b5cbe6; border-width: 1px 1px 0 0; padding: 2px 4px 0 0; }
.sogou { align-self: flex-end; margin: 0 -4px -4px 0; }
.zh { width: 16px; color: #0b6fd8; font: 700 15px/16px "Noto Sans CJK SC", sans-serif; }

/* site mark */
.mark { position: absolute; right: 11px; bottom: 8px; display: flex; opacity: .75; white-space: nowrap; }
.mark p { margin: 0; }
.m-a { font: 700 21px/24px "Noto Sans CJK SC", sans-serif; color: #3f86cc; }
.m-b { font: 700 16px/20px "Liberation Sans", sans-serif; color: #52bd72; }
```
